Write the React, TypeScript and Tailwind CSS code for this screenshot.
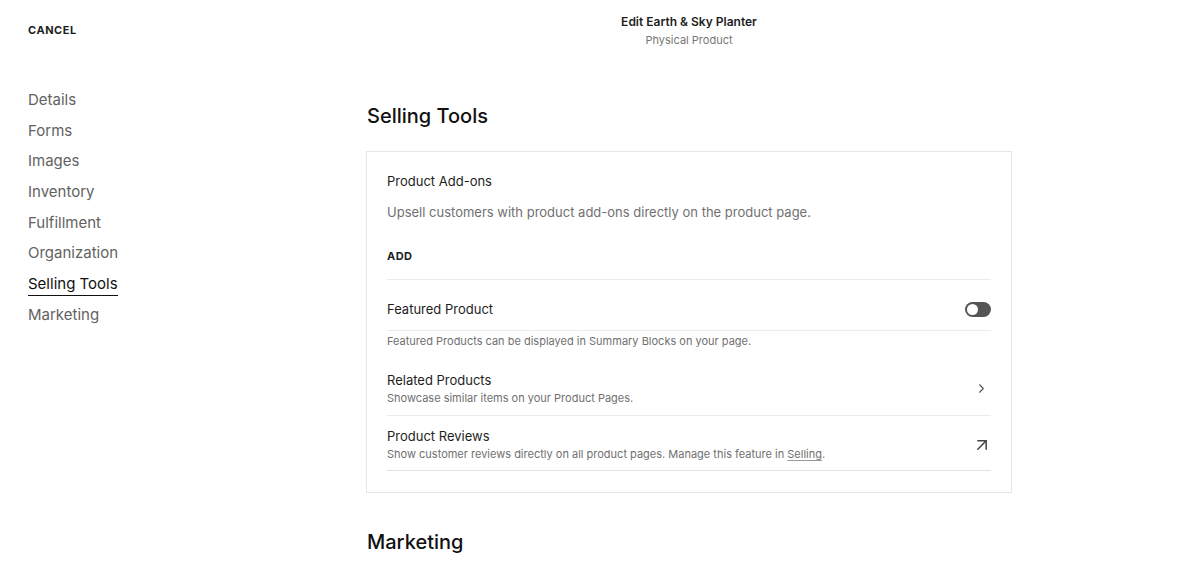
import { ChevronRight, ArrowUpRight } from 'lucide-react'

const NAV_ITEMS = [
  'Details',
  'Forms',
  'Images',
  'Inventory',
  'Fulfillment',
  'Organization',
  'Selling Tools',
  'Marketing',
]

const ACTIVE = 'Selling Tools'

const Toggle = () => (
  <div className="w-[26px] h-[15px] rounded-full bg-[#555] flex items-center px-[2px]">
    <div className="w-[11px] h-[11px] rounded-full bg-white" />
  </div>
)

const SellingTools = () => (
  <div className="border border-[#e6e6e6] px-[20px] pt-[19px] pb-[21px]">
    <div className="text-[13px] text-[#1e1e1e] leading-[20px]">Product Add-ons</div>
    <div className="mt-[11px] text-[13px] text-[#707070] leading-[20px]">
      Upsell customers with product add-ons directly on the product page.
    </div>
    <div className="mt-[26px] text-[11px] font-bold tracking-[0.04em] text-[#1e1e1e] leading-[16px]">
      ADD
    </div>

    <div className="mt-[15px] border-t border-[#ebebeb]" />
    <div className="flex items-center justify-between pt-[19px] pb-[11px]">
      <span className="text-[13px] text-[#1e1e1e] leading-[20px]">Featured Product</span>
      <Toggle />
    </div>
    <div className="border-t border-[#ebebeb]" />
    <div className="pt-[2px] text-[11px] text-[#707070] leading-[16px]">
      Featured Products can be displayed in Summary Blocks on your page.
    </div>

    <div className="mt-[22px] flex items-center justify-between pb-[9px]">
      <div>
        <div className="text-[13px] text-[#1e1e1e] leading-[18px]">Related Products</div>
        <div className="mt-[1px] text-[11px] text-[#707070] leading-[16px]">
          Showcase similar items on your Product Pages.
        </div>
      </div>
      <ChevronRight className="w-[15px] h-[15px] text-[#555] mr-[2px]" strokeWidth={1.7} />
    </div>
    <div className="border-t border-[#ebebeb]" />

    <div className="mt-[11px] flex items-center justify-between pb-[8px]">
      <div>
        <div className="text-[13px] text-[#1e1e1e] leading-[18px]">Product Reviews</div>
        <div className="mt-[1px] text-[11px] text-[#707070] leading-[16px]">
          Show customer reviews directly on all product pages. Manage this feature in{' '}
          <span className="underline decoration-[#999] underline-offset-2">Selling</span>.
        </div>
      </div>
      <ArrowUpRight className="w-[20px] h-[20px] text-[#444] mr-[-1px]" strokeWidth={1.8} />
    </div>
    <div className="border-t border-[#e2e2e2]" />
  </div>
)

export default function App() {
  return (
    <div
      className="w-[1200px] h-[574px] bg-white overflow-hidden"
      style={{ fontFamily: 'Inter, "Noto Sans", sans-serif' }}>
      <header className="h-[68px] flex items-start">
        <div className="w-[366px] pl-[28px] pt-[22px] text-[11px] font-bold tracking-[0.05em] text-[#1e1e1e]">
          CANCEL
        </div>
        <div className="w-[646px] pt-[14px] flex flex-col items-center">
          <div className="text-[12px] font-semibold text-[#1e1e1e] leading-[16px]">
            Edit Earth &amp; Sky Planter
          </div>
          <div className="mt-[2px] text-[11px] text-[#777] leading-[16px]">Physical Product</div>
        </div>
      </header>

      <div className="flex">
        <nav className="w-[366px] pl-[28px] pt-[21px]">
          <ul className="flex flex-col">
            {NAV_ITEMS.map((item) => (
              <li key={item} className="h-[30.7px] flex items-start">
                <span
                  className={`text-[15px] leading-[22px] ${
                    item === ACTIVE
                      ? 'text-[#111] border-b border-[#111]'
                      : 'text-[#626262]'
                  }`}>
                  {item}
                </span>
              </li>
            ))}
          </ul>
        </nav>

        <main className="w-[646px] pt-[34px]">
          <h2 className="text-[20px] font-medium text-[#111] leading-[28px] pl-[1px]">
            Selling Tools
          </h2>
          <div className="mt-[21px]">
            <SellingTools />
          </div>
          <h2 className="mt-[35px] text-[20px] font-medium text-[#111] leading-[28px] pl-[1px]">
            Marketing
          </h2>
        </main>
      </div>
    </div>
  )
}
